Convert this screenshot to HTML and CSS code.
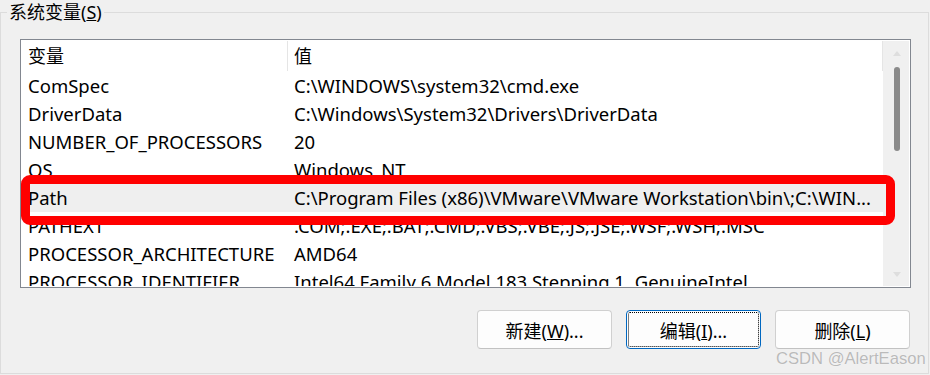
FILE: index.html
```html
<!DOCTYPE html>
<html>

<head>
    <meta charset="utf-8">
    <link rel="stylesheet" href="styles.css">
</head>

<body>
    <fieldset class="group">
        <legend>系统变量(<u>S</u>)</legend>
        <div class="listview">
            <div class="list_table">
                <div class="list_row list_head">
                    <div class="cell">变量</div>
                    <div class="cell">值</div>
                </div>
                <div class="list_row">
                    <div class="cell">ComSpec</div>
                    <div class="cell">C:\WINDOWS\system32\cmd.exe</div>
                </div>
                <div class="list_row">
                    <div class="cell">DriverData</div>
                    <div class="cell">C:\Windows\System32\Drivers\DriverData</div>
                </div>
                <div class="list_row">
                    <div class="cell">NUMBER_OF_PROCESSORS</div>
                    <div class="cell">20</div>
                </div>
                <div class="list_row">
                    <div class="cell">OS</div>
                    <div class="cell">Windows_NT</div>
                </div>
                <div class="list_row selected">
                    <div class="cell">Path</div>
                    <div class="cell">C:\Program Files (x86)\VMware\VMware Workstation\bin\;C:\WIN...</div>
                </div>
                <div class="list_row">
                    <div class="cell">PATHEXT</div>
                    <div class="cell">.COM;.EXE;.BAT;.CMD;.VBS;.VBE;.JS;.JSE;.WSF;.WSH;.MSC</div>
                </div>
                <div class="list_row">
                    <div class="cell">PROCESSOR_ARCHITECTURE</div>
                    <div class="cell">AMD64</div>
                </div>
                <div class="list_row">
                    <div class="cell">PROCESSOR_IDENTIFIER</div>
                    <div class="cell">Intel64 Family 6 Model 183 Stepping 1, GenuineIntel</div>
                </div>
            </div>
            <div class="scrollbar">
                <div class="arrow">
                    <svg width="8" height="5" viewBox="0 0 8 5"><path d="M0 5 L4 0 L8 5 Z" fill="#dedede"/></svg>
                </div>
                <div class="thumb"></div>
                <div class="arrow arrow_down">
                    <svg width="8" height="5" viewBox="0 0 8 5"><path d="M0 0 L4 5 L8 0 Z" fill="#dedede"/></svg>
                </div>
            </div>
        </div>
        <div class="buttons">
            <button class="btn">新建(<u>W</u>)...</button>
            <button class="btn btn_focus">编辑(<u>I</u>)...</button>
            <button class="btn">删除(<u>L</u>)</button>
        </div>
    </fieldset>

    <!-- annotation on top of the screenshot -->
    <div class="mark_box"></div>
    <div class="watermark">CSDN @AlertEason</div>
</body>

</html>
```

FILE: styles.css
```css
body {
    margin: 0;
    width: 930px;
    height: 375px;
    overflow: hidden;
    position: relative;
    background: #f0f0f0;
    font-family: "Noto Sans", "Noto Sans CJK SC", sans-serif;
    font-size: 18px;
    color: #000;
}

.group {
    box-sizing: border-box;
    width: 929px;
    min-width: 0;
    margin: 0;
    padding: 15px 17px 24px 6px;
    border: 1px solid #dcdcdc;
}

.group legend {
    padding: 0 2px;
    line-height: 24px;
}

.listview {
    box-sizing: border-box;
    width: 891px;
    height: 249px;
    margin-left: 13px;
    padding: 1px;
    border: 1px solid #828790;
    background: #fff;
    display: grid;
    grid-template-columns: 861px 26px;
}

.list_table {
    overflow: hidden;
}

.list_row {
    display: grid;
    grid-template-columns: 266px 595px;
    height: 28px;
    line-height: 27px;
    font-size: 18.5px;
}

.list_row .cell {
    padding-left: 6px;
    white-space: nowrap;
    overflow: hidden;
}

.list_head {
    height: 31px;
    line-height: 30px;
    font-size: 18px;
}

.list_head .cell {
    box-sizing: border-box;
    height: 30px;
    border-right: 1px solid #e5e5e5;
}

.selected {
    background: #efefef;
}

.scrollbar {
    background: #f0f0f0;
    display: flex;
    flex-direction: column;
    align-items: center;
}

.arrow {
    height: 24px;
    display: flex;
    align-items: center;
    justify-content: center;
    padding-left: 2px;
}

.arrow_down {
    margin-top: auto;
}

.thumb {
    width: 6px;
    height: 84px;
    margin-top: 2px;
    margin-left: 2px;
    border-radius: 3px;
    background: #8a8a8a;
}

.buttons {
    display: flex;
    justify-content: flex-end;
    gap: 14px;
    margin-top: 22px;
    padding-right: 1px;
}

.btn {
    box-sizing: border-box;
    width: 135px;
    height: 39px;
    padding: 0;
    border: 1px solid #d0d0d0;
    border-bottom-color: #c2c2c2;
    border-radius: 4px;
    background: #fdfdfd;
    font-family: inherit;
    font-size: 18px;
    color: #000;
}

.btn_focus {
    border-color: #0067c0;
    outline: 1px dotted #000;
    outline-offset: -3px;
}

.mark_box {
    position: absolute;
    left: 21px;
    top: 175px;
    box-sizing: border-box;
    width: 874px;
    height: 50px;
    border: 9px solid #ff0000;
    border-radius: 9px;
}

.watermark {
    position: absolute;
    left: 776px;
    top: 350px;
    white-space: nowrap;
    font-family: "Liberation Sans", sans-serif;
    font-size: 16.6px;
    line-height: 17px;
    color: #bababa;
    text-shadow: 0 0 1px #fff;
}
```
